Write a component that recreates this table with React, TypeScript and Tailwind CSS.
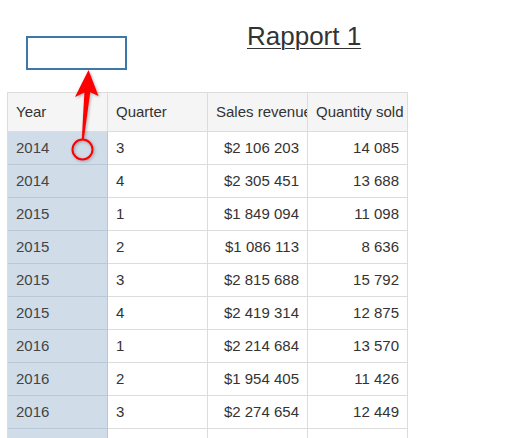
import React from "react";

const rows: [string, string, string, string][] = [
  ["2014", "3", "$2 106 203", "14 085"],
  ["2014", "4", "$2 305 451", "13 688"],
  ["2015", "1", "$1 849 094", "11 098"],
  ["2015", "2", "$1 086 113", "8 636"],
  ["2015", "3", "$2 815 688", "15 792"],
  ["2015", "4", "$2 419 314", "12 875"],
  ["2016", "1", "$2 214 684", "13 570"],
  ["2016", "2", "$1 954 405", "11 426"],
  ["2016", "3", "$2 274 654", "12 449"],
  ["", "", "", ""],
];

const headers = ["Year", "Quarter", "Sales revenue", "Quantity sold"];

const ArrowOverlay = () => (
  <svg
    className="absolute left-0 top-0 pointer-events-none"
    width="516"
    height="438"
    viewBox="0 0 516 438"
    style={{ filter: "drop-shadow(1px 1px 1.5px rgba(0,0,0,0.3))" }}
  >
    <polygon points="84.5,90 90.5,90 83.8,139.5 81.8,139.5" fill="#ff0000" />
    <polygon points="88.5,70 75,97 87.5,91 98.5,96" fill="#ff0000" />
    <circle cx="82.5" cy="149.5" r="10" fill="none" stroke="#ff0000" strokeWidth="2" />
  </svg>
);

export default function App() {
  return (
    <div
      className="relative w-[516px] h-[438px] overflow-hidden bg-white text-[#333]"
      style={{ fontFamily: '"Liberation Sans", Arial, sans-serif' }}
    >
      <div className="flex h-[92px]">
        <div className="ml-[26px] mt-[36px] w-[101px] h-[34px] border-2 border-[#3c78aa] bg-white" />
        <div className="ml-[120px] mt-[22px] text-[26px] leading-[29px] underline underline-offset-[3px] decoration-1">
          Rapport 1
        </div>
      </div>

      <div className="ml-[7px] grid grid-cols-[100px_100px_100px_100px] border-l border-t border-[#dcdcdc] w-max text-[15px]">
        {headers.map((h) => (
          <div
            key={h}
            className="h-[39px] flex items-center px-[8px] bg-[#f5f5f5] border-r border-b border-[#dcdcdc] whitespace-nowrap overflow-hidden"
          >
            {h}
          </div>
        ))}
        {rows.map((r, i) => (
          <React.Fragment key={i}>
            <div className="h-[33px] flex items-center px-[8px] bg-[#d0dde9] border-r border-b border-[#b9c8d6] text-[#444]">
              {r[0]}
            </div>
            <div className="h-[33px] flex items-center px-[8px] border-r border-b border-[#dcdcdc]">
              {r[1]}
            </div>
            <div className="h-[33px] flex items-center justify-end px-[8px] border-r border-b border-[#dcdcdc]">
              {r[2]}
            </div>
            <div className="h-[33px] flex items-center justify-end px-[8px] border-r border-b border-[#dcdcdc]">
              {r[3]}
            </div>
          </React.Fragment>
        ))}
      </div>

      <ArrowOverlay />
    </div>
  );
}
